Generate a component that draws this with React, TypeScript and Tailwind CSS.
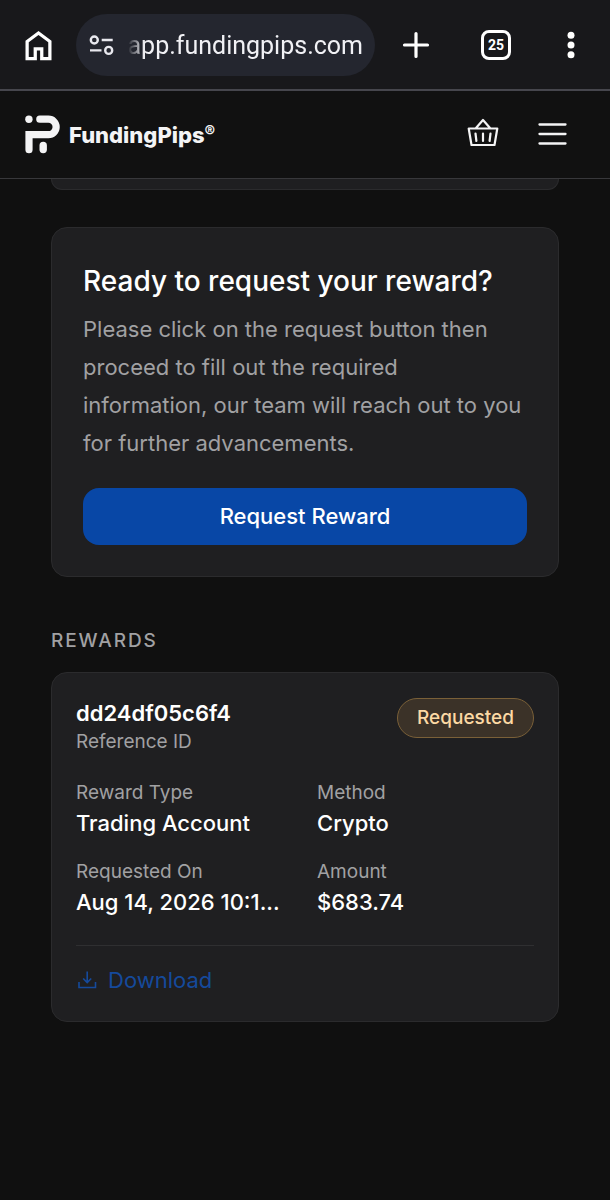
import React from "react";

interface RewardField {
  label: string;
  value: string;
}

interface Reward {
  id: string;
  status: string;
  fields: RewardField[];
}

const rewards: Reward[] = [
  {
    id: "dd24df05c6f4",
    status: "Requested",
    fields: [
      { label: "Reward Type", value: "Trading Account" },
      { label: "Method", value: "Crypto" },
      { label: "Requested On", value: "Aug 14, 2026 10:1..." },
      { label: "Amount", value: "$683.74" },
    ],
  },
];

const BrowserBar: React.FC = () => {
  return (
    <div className="flex items-center border-b-2 border-[#46464d] bg-[#18181b] pt-3.5 pb-[13px] pl-[19px] pr-[29px] text-white">
      <button aria-label="Home" className="shrink-0">
        <svg width="39" height="39" viewBox="0 0 24 24" fill="currentColor">
          <path d="M6 19h3v-6h6v6h3v-9l-6-4.5L6 10v9Zm-2 2V9l8-6 8 6v12h-7v-6h-2v6H4Z" />
        </svg>
      </button>

      <div className="ml-[18px] flex h-[62px] min-w-0 flex-1 items-center rounded-full bg-[#24262f] pl-3 pr-3">
        <button aria-label="Site settings" className="shrink-0">
          <svg width="28" height="22" viewBox="0 0 28 22" fill="none" stroke="#e8e8ee" strokeWidth="2.4">
            <circle cx="6.3" cy="6" r="3.5" />
            <path d="M13.7 6h11M2 16.4h11.5" />
            <circle cx="20.7" cy="16.4" r="3.5" />
          </svg>
        </button>
        <input
          aria-label="Address"
          defaultValue="app.fundingpips.com"
          className="h-full w-full min-w-0 bg-transparent text-right font-[Roboto,sans-serif] text-[25px] text-[#f1f1f5] outline-none [mask-image:linear-gradient(to_right,transparent_12px,black_28px)]"
        />
      </div>

      <button aria-label="New tab" className="ml-6 shrink-0">
        <svg width="34" height="34" viewBox="0 0 34 34" fill="none" stroke="currentColor" strokeWidth="3.2" strokeLinecap="round">
          <path d="M17 5.500v23M5.500 17h23" />
        </svg>
      </button>
      <button
        aria-label="Tabs"
        className="ml-12 flex size-[30px] shrink-0 items-center justify-center rounded-lg border-3 border-white font-[Roboto,sans-serif] text-sm font-bold"
      >
        25
      </button>
      <button aria-label="More" className="ml-[50px] shrink-0">
        <svg width="20" height="34" viewBox="0 0 20 34" fill="currentColor">
          <circle cx="10" cy="7.3" r="3.5" />
          <circle cx="10" cy="17" r="3.5" />
          <circle cx="10" cy="26.7" r="3.5" />
        </svg>
      </button>
    </div>
  );
};

const Header: React.FC = () => {
  return (
    <header className="flex h-[88px] items-center justify-between border-b border-[#38383b] bg-[#111111] pl-6 pr-[43px] text-[#f4f4f5]">
      <a href="#" className="flex items-center gap-2">
        <svg width="37" height="40" viewBox="0 0 37 40" fill="none" stroke="currentColor">
          <circle cx="4.9" cy="4.2" r="3.7" fill="currentColor" stroke="none" />
          <path d="M15.8 4.2h8.600a7.750 7.750 0 0 1 0 15.500H5V34.700" strokeWidth="7.2" strokeLinecap="round" />
          <path d="M19.200 30.500v4" strokeWidth="7.4" strokeLinecap="round" />
        </svg>
        <span className="flex text-[22px] leading-8 font-extrabold">
          FundingPips
          <span className="text-base leading-6 font-bold">®</span>
        </span>
      </a>
      <div className="flex items-center gap-8">
        <button aria-label="Cart">
          <svg width="36" height="36" viewBox="0 0 36 36" fill="none" stroke="currentColor" strokeWidth="2.2" strokeLinecap="round" strokeLinejoin="round">
            <path d="M3.7 11.500h28.6l-2.800 16.500H6.500zM11 11l7-8 7 8" />
            <path d="M10.500 16.500l.9 7.500M18 16.500V24M25.500 16.500l-.9 7.500" />
          </svg>
        </button>
        <button aria-label="Menu">
          <svg width="34" height="34" viewBox="0 0 34 34" fill="none" stroke="currentColor" strokeWidth="2.3" strokeLinecap="round">
            <path d="M6.500 6.500h26M6.500 16h26M6.500 25.500h26" />
          </svg>
        </button>
      </div>
    </header>
  );
};

const RequestCard: React.FC = () => {
  return (
    <section className="mt-[37px] rounded-2xl border border-[#2b2b2d] bg-[#1f1f21] px-[31px] pt-8 pb-[31px]">
      <h2 className="text-[28px] leading-[42px] font-medium text-white">
        Ready to request your reward?
      </h2>
      <p className="mt-2 text-[22px] leading-[38px] text-[#a1a1a3]">
        Please click on the request button then proceed to fill out the required
        information, our team will reach out to you for further advancements.
      </p>
      <button className="mt-[26px] h-[57px] w-full rounded-2xl bg-[#0847a6] text-[22px] font-medium text-white">
        Request Reward
      </button>
    </section>
  );
};

const RewardCard: React.FC<{ reward: Reward }> = ({ reward }) => {
  return (
    <article className="rounded-2xl border border-[#2b2b2d] bg-[#1f1f21] px-6 pt-[25px] pb-[26px]">
      <div className="flex items-start justify-between">
        <div>
          <h4 className="text-[22px] leading-[30px] font-semibold text-white">{reward.id}</h4>
          <p className="text-[19px] leading-7 text-[#a1a1a3]">Reference ID</p>
        </div>
        <span className="rounded-full border border-[#7a6038] bg-[#3b3228] px-[19px] py-1.5 text-[19px] leading-[26px] font-medium text-[#fcd9a4]">
          {reward.status}
        </span>
      </div>

      <dl className="mt-6 grid grid-cols-2 gap-x-6 gap-y-[21px]">
        {reward.fields.map((field) => (
          <div key={field.label} className="min-w-0">
            <dt className="text-[19px] leading-[26px] text-[#a1a1a3]">{field.label}</dt>
            <dd className="mt-0.5 truncate text-[22px] leading-[30px] font-medium text-white">
              {field.value}
            </dd>
          </div>
        ))}
      </dl>

      <div className="mt-7 border-t border-[#2f2f31] pt-[19px]">
        <a href="#" className="flex items-center gap-2 text-[22px] leading-[30px] text-[#154a9c]">
          <svg width="24" height="24" viewBox="0 0 24 24" fill="none" stroke="currentColor" strokeWidth="1.6">
            <path d="M3 14v5.500h16.500V14M11.200 3.500v11M7.200 10.500l4 4 4-4" />
          </svg>
          Download
        </a>
      </div>
    </article>
  );
};

const App: React.FC = () => {
  return (
    <div className="flex min-h-screen flex-col bg-[#101010] font-[Inter,sans-serif]">
      <BrowserBar />
      <Header />
      <main className="px-[51px] pb-12">
        {/* tail of the card scrolled under the header */}
        <div className="h-[11px] rounded-b-2xl border border-t-0 border-[#2b2b2d] bg-[#1f1f21]" />
        <RequestCard />
        <h3 className="mt-[50px] mb-[17px] text-[19px] leading-7 font-medium tracking-widest text-[#a1a1a3] uppercase">
          Rewards
        </h3>
        {rewards.map((reward) => (
          <RewardCard key={reward.id} reward={reward} />
        ))}
      </main>
    </div>
  );
};

export default App;
